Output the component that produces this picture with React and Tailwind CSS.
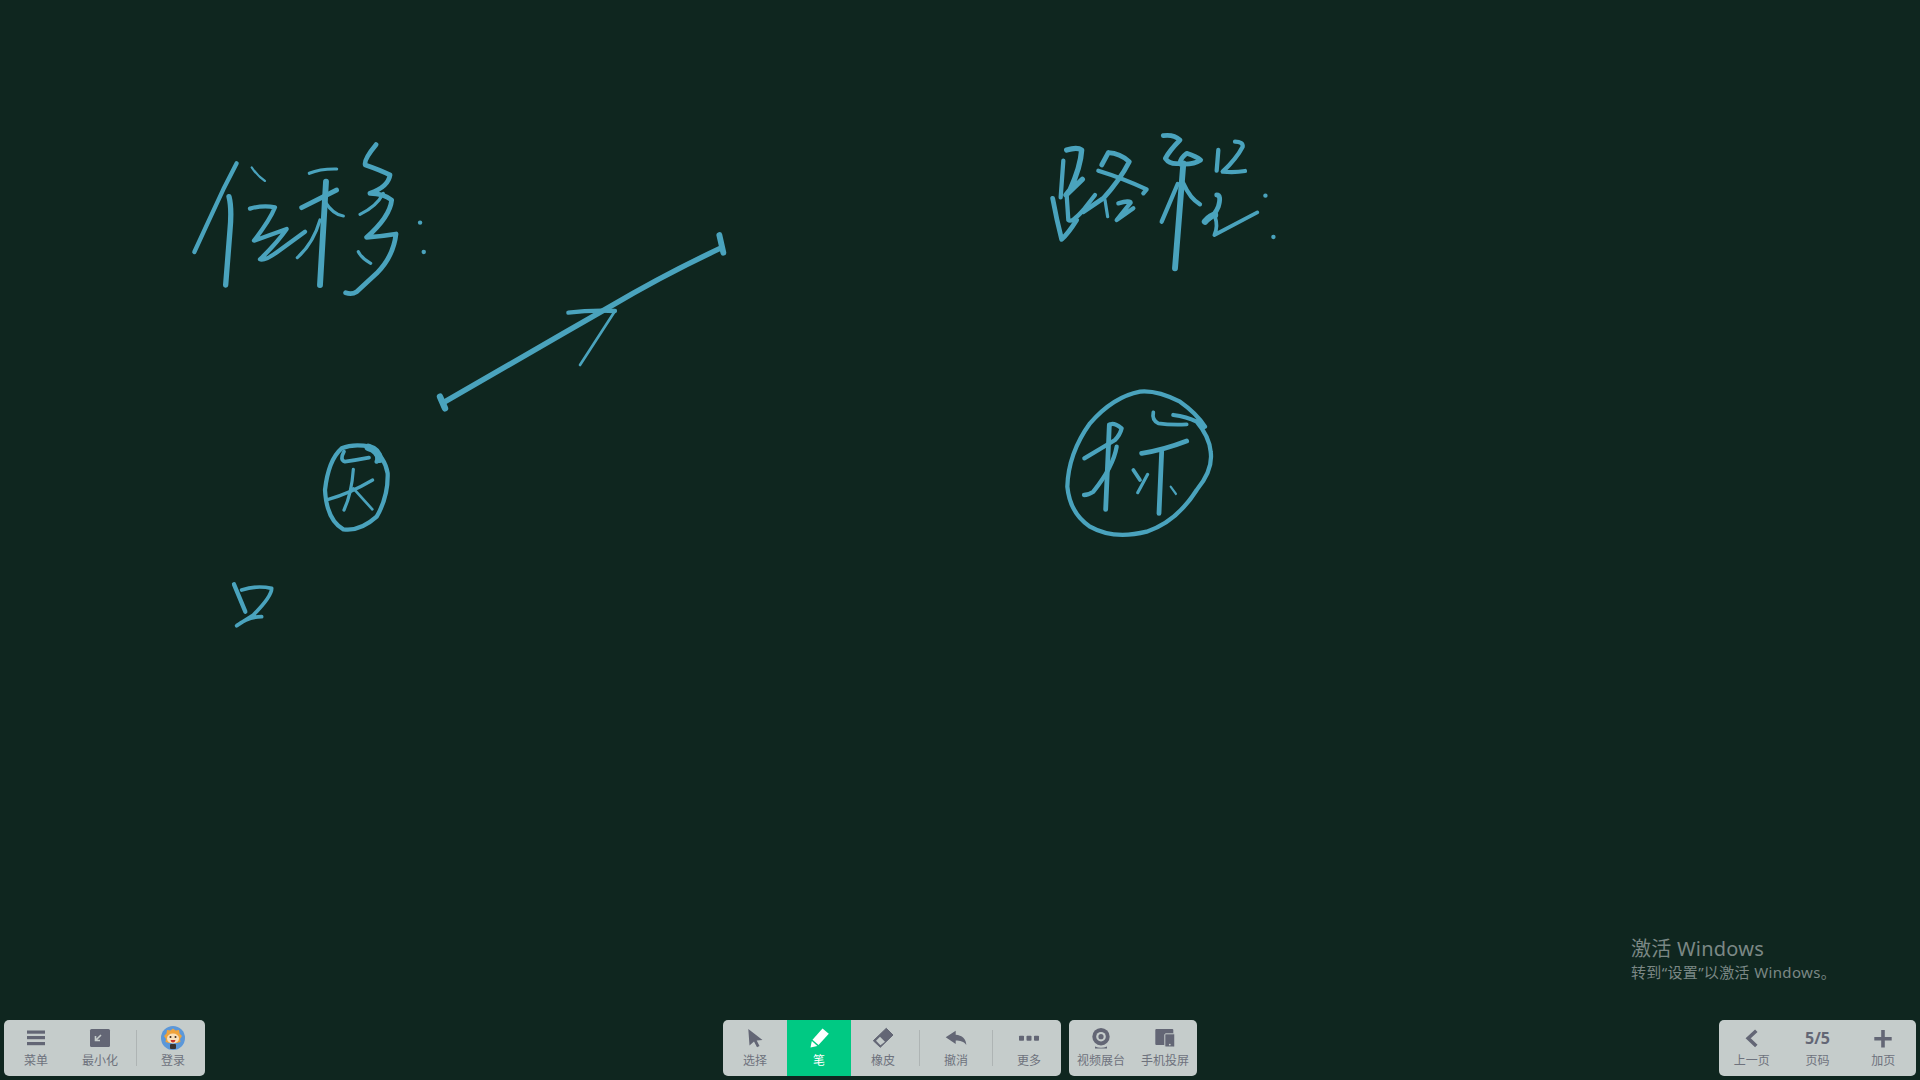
const ink = [
  { o: [180, 130], s: [
    ["M170 100 L130 178 L85 275 L43 366", 8],
    ["M147 200 Q156 235 150 300 L137 465", 10],
    ["M215 112 Q232 138 255 153", 4],
    ["M210 236 Q250 224 285 232 Q270 270 222 332 L320 297 Q290 340 240 388 Q252 396 300 360 L375 305", 8],
    ["M388 130 Q420 116 470 117", 6],
    ["M365 233 L470 180", 9],
    ["M438 155 L420 465", 11],
    ["M435 215 Q460 255 490 258", 6],
    ["M420 270 Q400 340 352 383", 6],
    ["M588 44 Q550 90 556 105 Q600 120 630 135 Q625 170 570 190 Q610 190 635 210 Q630 260 560 322 Q600 320 648 312 Q640 380 590 430 L530 485 Q515 495 497 488", 9],
    ["M610 190 Q590 230 540 253", 6],
    ["M535 365 Q545 385 572 400", 6],
    ["M720 278 L720.5 278", 8],
    ["M731 366 L731.5 366", 8],
  ] },
  { o: [1040, 120], s: [
    ["M80 90 Q112 80 125 90 Q122 140 90 210 L78 225 L127 178", 10],
    ["M70 122 L62 232", 8],
    ["M38 235 Q50 300 65 358 Q85 340 110 300", 9],
    ["M80 225 L85 300 Q95 310 130 270 L165 225", 8],
    ["M205 98 L185 135 M205 98 Q240 100 268 125 Q240 180 190 235 L130 275", 9],
    ["M175 152 Q250 175 320 208 L310 220", 8],
    ["M195 240 L203 290", 6],
    ["M235 250 Q270 240 272 248 L230 300 L280 265", 8],
    ["M370 47 Q400 42 420 60 Q390 90 376 115 Q390 135 420 130 Q420 115 440 100 Q470 110 482 120 Q460 135 420 132", 9],
    ["M430 130 L405 445", 11],
    ["M413 192 L365 305", 8],
    ["M430 190 Q450 235 480 253", 8],
    ["M535 90 L530 152", 8],
    ["M585 65 Q610 65 608 80 Q590 115 548 155 Q585 158 615 153", 8],
    ["M530 225 Q545 225 535 260 Q525 285 505 298", 9],
    ["M495 305 Q512 285 525 285", 12],
    ["M525 290 Q535 320 523 345 Q590 310 652 277", 7],
    ["M676 227 L676.5 227", 8],
    ["M700 351 L700.5 351", 8],
  ] },
  { o: [1050, 380], s: [
    ["M465 140 Q440 100 390 65 Q320 30 270 35 Q190 50 120 130 Q55 220 52 320 Q60 400 120 440 Q190 480 290 455 Q380 425 440 330 Q490 270 482 215 Q478 170 440 125 Q410 110 370 105", 8],
    ["M310 97 Q305 120 325 130 Q360 135 410 133", 7],
    ["M178 135 L167 388", 9],
    ["M178 135 Q190 125 215 145 Q210 165 195 180 L103 235", 8],
    ["M200 200 Q190 260 130 335 Q115 345 102 345", 8],
    ["M250 270 L270 300", 7],
    ["M293 283 L263 338", 6],
    ["M275 220 Q340 210 410 183", 9],
    ["M335 215 L327 400", 9],
    ["M362 320 L378 342", 4],
  ] },
  { o: [220, 430], s: [
    ["M470 95 Q480 70 450 50 Q400 40 365 55 Q325 90 315 180 Q320 270 370 298 Q420 305 470 260 Q505 200 503 130 Q495 80 450 50", 8],
    ["M445 52 Q475 60 478 88", 14],
    ["M372 65 Q358 90 375 95 Q410 90 447 83", 7],
    ["M325 208 Q390 190 458 150", 6],
    ["M400 118 Q395 190 372 240", 6],
    ["M400 175 L457 238", 5],
    ["M42 463 L76 545", 8],
    ["M65 480 Q110 465 155 475 Q155 500 100 555 L50 587 Q85 560 125 560", 7],
  ] },
  { o: [430, 225], s: [
    ["M40 533 Q200 440 400 325 L540 245 Q700 150 875 68", 10],
    ["M868 30 L880 83", 11],
    ["M30 515 L45 550", 12],
    ["M415 263 Q480 255 555 258", 8],
    ["M555 258 L450 420", 5],
  ] },
];

function Canvas() {
  return (
    <svg className="absolute inset-0 w-full h-full" viewBox="0 0 1920 1080" fill="none" stroke="#4aa3bd" strokeLinecap="round" strokeLinejoin="round">
      {ink.map((g, i) => (
        <g key={i} transform={`translate(${g.o[0]} ${g.o[1]}) scale(${1 / 3})`}>
          {g.s.map((p, j) => <path key={j} d={p[0]} strokeWidth={p[1] * 1.6} />)}
        </g>
      ))}
    </svg>
  );
}

const C = "#636675";
const L = "#c5cccb";
const I = ({ children }) => <svg width="24" height="24" viewBox="0 0 24 24" className="block shrink-0">{children}</svg>;

const MenuI = () => <I><rect x="3" y="4.5" width="18" height="3.2" fill={C}/><rect x="3" y="10" width="18" height="3.2" fill={C}/><rect x="3" y="16" width="18" height="3.2" fill={C}/></I>;
const MinI = () => <I><rect x="2" y="3" width="20" height="18" rx="1.5" fill={C}/><path d="M13 9 L8 14 M7.5 10 V14.5 H12" stroke={L} strokeWidth="1.6" fill="none"/></I>;
const Avatar = () => <I>
  <circle cx="12" cy="12" r="12" fill="#5b97d9"/>
  <path d="M12 2.5 L14.5 4.5 L18 4 L18.5 7.5 L21 10 L19 13 L19.5 16 L16 17 L8 17 L4.5 16 L5 13 L3 10 L5.5 7.5 L6 4 L9.5 4.5Z" fill="#f0a33c"/>
  <ellipse cx="12" cy="12.5" rx="6" ry="5" fill="#f9e0bd"/>
  <circle cx="9.5" cy="11" r="1" fill="#3a2a20"/><circle cx="14.5" cy="11" r="1" fill="#3a2a20"/>
  <path d="M9.5 14 H14.5 Q14 16.5 12 16.5 Q10 16.5 9.5 14Z" fill="#c8342b"/>
  <rect x="9" y="18" width="6" height="5" rx="1" fill="#3a3230"/>
</I>;
const CursorI = () => <I><path d="M5.3 3 L19.5 14 L13.7 14.6 L16.5 20 L14 21.2 L11 15.6 L6.5 19.5Z" fill={C}/></I>;
const PenI = () => <I><path d="M15.5 2.5 L21.8 7.8 L11.5 19 L5.5 13.8Z" fill="#fff"/><path d="M4.8 15 L10.4 20 L3.5 21.5Z" fill="#fff"/></I>;
const EraserI = () => <I><path d="M15.3 2.3 L22 9 L9.3 21.3 L2.3 14.7Z" fill={C} strokeLinejoin="round" stroke={C}/><path d="M9 10.8 L14 15.8 L9.4 19.2 L5 14.7Z" fill={L}/></I>;
const UndoI = () => <I><path d="M1.7 11.3 L11.7 4.7 V8.7 C18 9 22.3 13 22.3 19 C20 15.5 16 14.5 11.7 14.5 V18Z" fill={C}/></I>;
const DotsI = () => <I><rect x="2" y="9.7" width="5" height="5" rx="0.8" fill={C}/><rect x="9.5" y="9.7" width="5" height="5" rx="0.8" fill={C}/><rect x="17" y="9.7" width="5" height="5" rx="0.8" fill={C}/></I>;
const CamI = () => <I><circle cx="12" cy="10.7" r="8.7" fill={C}/><circle cx="12" cy="10.7" r="4.8" fill={L}/><circle cx="12" cy="10.7" r="2.6" fill={C}/><path d="M6 20.5 Q12 23 18 20.5 V22.5 H6Z" fill={C}/></I>;
const PadI = () => <I><rect x="2.3" y="3" width="18" height="16" rx="1" fill={C}/><rect x="11.8" y="7.8" width="10" height="13.2" rx="1" fill={C} stroke={L} strokeWidth="1"/><circle cx="16.8" cy="18.6" r="0.9" fill={L}/></I>;
const PrevI = () => <I><path d="M16.3 4.7 L8.2 12.3 L16.3 20" stroke={C} strokeWidth="3.6" fill="none"/></I>;
const PlusI = () => <I><path d="M12 4 V21.4 M3.3 12.7 H20.7" stroke={C} strokeWidth="3.6" fill="none"/></I>;

function Btn({ icon, label, active, w = "w-16" }) {
  return (
    <div className={`${w} h-14 flex flex-col items-center pt-[6px] ${active ? "bg-[#00c983]" : ""}`}>
      {icon}
      <span className={`mt-[3px] text-[12px] leading-4 whitespace-nowrap ${active ? "text-white" : "text-[#6e727d]"}`}>{label}</span>
    </div>
  );
}
const Div = () => <div className="w-px h-9 mx-1 self-center bg-[#aeb4b4]" />;
const Bar = ({ children, className = "" }) => <div className={`flex h-14 rounded-[5px] overflow-hidden bg-[#c5cccb] ${className}`}>{children}</div>;

export default function App() {
  return (
    <div className="relative w-[1920px] h-[1080px] overflow-hidden bg-[#0f261f] flex flex-col justify-end" style={{ fontFamily: '"Noto Sans","Noto Sans CJK SC",sans-serif' }}>
      <Canvas />
      <div className="absolute left-[1631px] top-[935px] text-[#7b8885] whitespace-nowrap">
        <div className="text-[20px] leading-[28px] tracking-[0.25px]">激活 Windows</div>
        <div className="text-[15px] leading-5 -mt-px tracking-[0.35px]">转到“设置”以激活 Windows。</div>
      </div>
      <div className="relative grid grid-cols-[1fr_auto_1fr] px-1 pb-1">
        <div className="flex">
          <Bar>
            <Btn icon={<MenuI />} label="菜单" />
            <Btn icon={<MinI />} label="最小化" />
            <Div />
            <Btn icon={<Avatar />} label="登录" />
          </Bar>
        </div>
        <div className="flex gap-2">
          <Bar>
            <Btn icon={<CursorI />} label="选择" />
            <Btn icon={<PenI />} label="笔" active />
            <Btn icon={<EraserI />} label="橡皮" />
            <Div />
            <Btn icon={<UndoI />} label="撤消" />
            <Div />
            <Btn icon={<DotsI />} label="更多" />
          </Bar>
          <Bar>
            <Btn icon={<CamI />} label="视频展台" />
            <Btn icon={<PadI />} label="手机投屏" />
          </Bar>
        </div>
        <div className="flex justify-end">
          <Bar className="w-[197px]">
            <Btn w="flex-1" icon={<PrevI />} label="上一页" />
            <Btn w="flex-1" icon={<div className="h-6 flex items-center text-[16px] font-bold text-[#636675]">5/5</div>} label="页码" />
            <Btn w="flex-1" icon={<PlusI />} label="加页" />
          </Bar>
        </div>
      </div>
    </div>
  );
}
